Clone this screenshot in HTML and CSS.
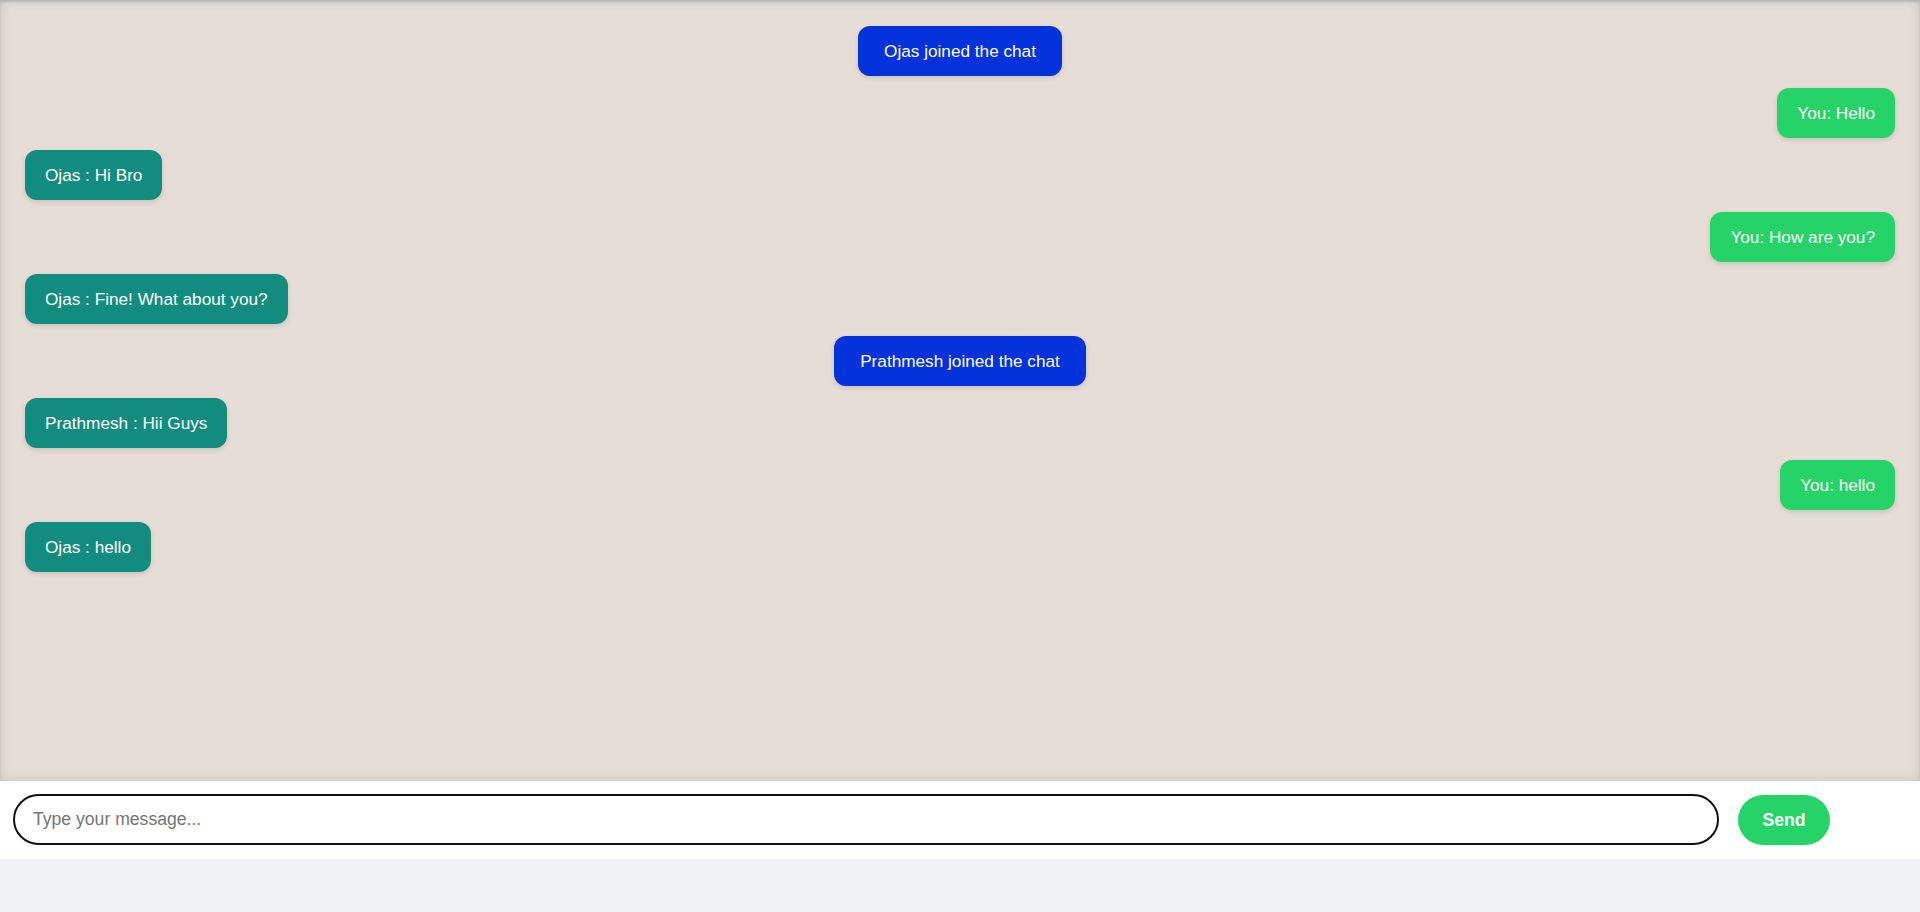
FILE: index.html
```html
<!DOCTYPE html>
<html lang="en">
<head>
<meta charset="UTF-8">
<title>Chat</title>
<link rel="stylesheet" href="styles.css">
</head>
<body>
<div class="chat">
  <div class="msg system">Ojas joined the chat</div>
  <div class="msg mine">You: Hello</div>
  <div class="msg other">Ojas : Hi Bro</div>
  <div class="msg mine">You: How are you?</div>
  <div class="msg other">Ojas : Fine! What about you?</div>
  <div class="msg system">Prathmesh joined the chat</div>
  <div class="msg other">Prathmesh : Hii Guys</div>
  <div class="msg mine">You: hello</div>
  <div class="msg other">Ojas : hello</div>
</div>
<form class="composer">
  <div class="composer-row">
    <input class="field" type="text" placeholder="Type your message...">
    <button class="send" type="button">Send</button>
  </div>
</form>
</body>
</html>
```
FILE: styles.css
```css
* { box-sizing: border-box; }
html, body { margin: 0; padding: 0; }
body {
  background: #f0f2f5;
  font-family: "Liberation Sans", Arial, sans-serif;
  height: 912px;
  overflow: hidden;
}
.chat {
  height: 781px;
  background: #e5ddd6;
  box-shadow: inset 0 2px 2px rgba(0,0,0,0.12), inset 0 0 12px rgba(0,0,0,0.12);
  display: flex;
  flex-direction: column;
  align-items: flex-start;
  gap: 12px;
  padding: 26px 25px;
}
.msg {
  font-size: 17.2px;
  line-height: 20px;
  padding: 15px 20px;
  border-radius: 12px;
  color: #fff;
  box-shadow: 0 2px 5px rgba(0,0,0,0.12);
}
.system {
  align-self: center;
  background: #0331da;
  padding: 15px 26px;
}
.mine {
  align-self: flex-end;
  background: #25d366;
}
.other {
  align-self: flex-start;
  background: #128c7e;
}
.composer {
  margin: 0;
  background: #fff;
  height: 78px;
  padding: 13px 13px 0;
}
.composer-row {
  width: 1817px;
  display: flex;
  align-items: flex-start;
  gap: 19px;
}
.field {
  flex: 1;
  height: 51px;
  border: 2px solid #111;
  border-radius: 26px;
  padding: 0 18px;
  font-family: "Liberation Sans", Arial, sans-serif;
  font-size: 17.6px;
  color: #222;
  background: #fff;
  outline: none;
}
.field::placeholder { color: #757575; }
.send {
  margin-top: 1px;
  width: 92px;
  height: 50px;
  border: none;
  border-radius: 25px;
  background: #25d366;
  color: #fff;
  font-family: "Liberation Sans", Arial, sans-serif;
  font-weight: bold;
  font-size: 17.6px;
  padding: 0;
}
```
